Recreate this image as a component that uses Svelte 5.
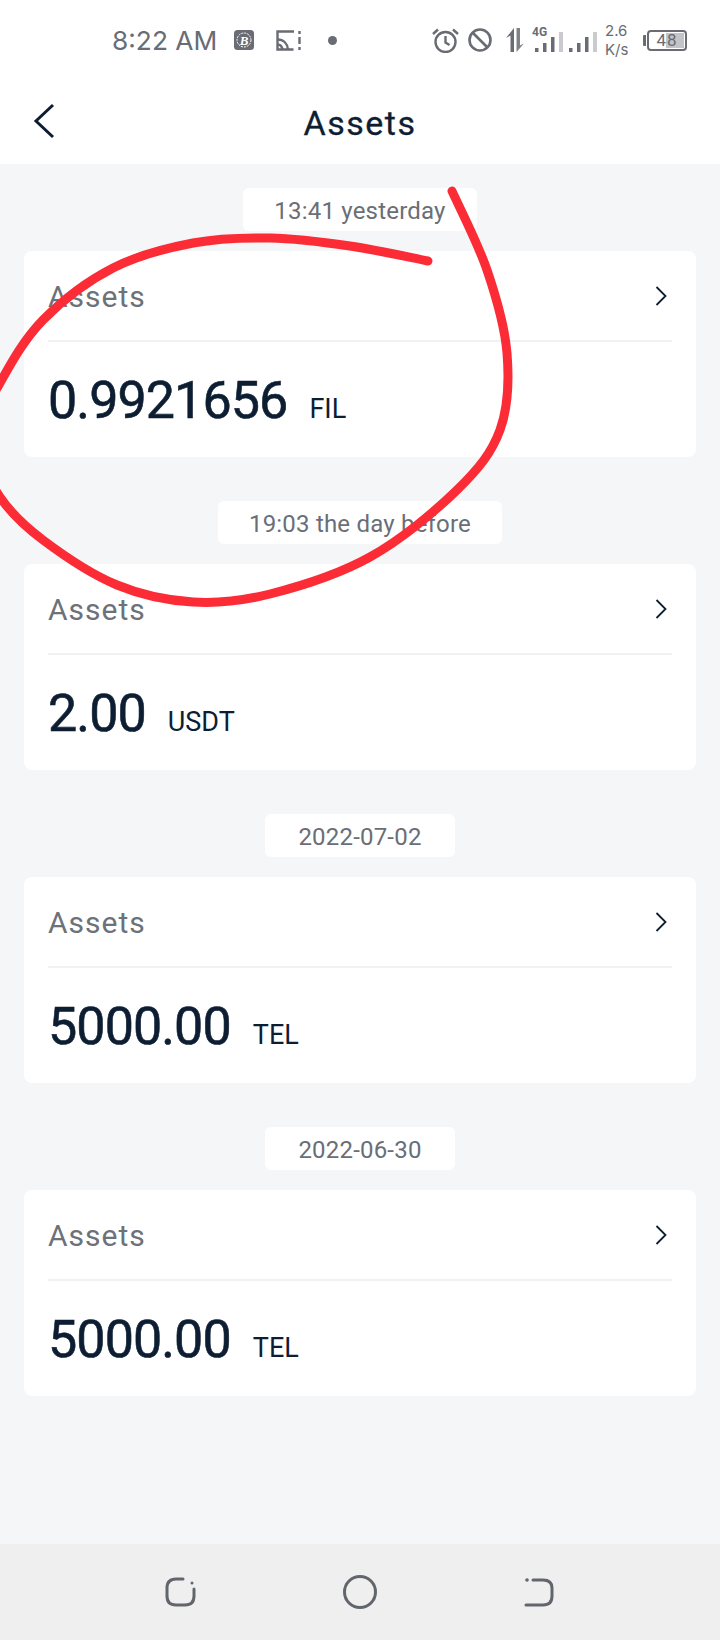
<script>
  const groups = [
    { when: '13:41 yesterday', amount: '0.9921656', unit: 'FIL' },
    { when: '19:03 the day before', amount: '2.00', unit: 'USDT' },
    { when: '2022-07-02', amount: '5000.00', unit: 'TEL' },
    { when: '2022-06-30', amount: '5000.00', unit: 'TEL' }
  ];

  // red pen circle drawn over the first card
  const pen = [
    [452, 191], [487, 270], [507, 353], [500, 430], [457, 490], [370, 557], [270, 594],
    [193, 602], [117, 585], [43, 540], [0, 497], [-24, 440], [0, 383], [43, 320], [113, 268],
    [193, 243], [270, 238], [350, 246], [428, 261]
  ];

  function smooth(pts) {
    let d = `M${pts[0][0]} ${pts[0][1]}`;
    for (let i = 0; i < pts.length - 1; i++) {
      const a = pts[i - 1] ?? pts[i];
      const b = pts[i];
      const c = pts[i + 1];
      const e = pts[i + 2] ?? c;
      const c1 = [b[0] + (c[0] - a[0]) / 6, b[1] + (c[1] - a[1]) / 6];
      const c2 = [c[0] - (e[0] - b[0]) / 6, c[1] - (e[1] - b[1]) / 6];
      d += ` C${c1[0]} ${c1[1]} ${c2[0]} ${c2[1]} ${c[0]} ${c[1]}`;
    }
    return d;
  }
</script>

<div class="screen">
  <header class="top">
    <div class="status">
      <span class="time">8:22 AM</span>
      <svg class="ic-b" width="20" height="20" viewBox="0 0 20 20">
        <rect width="20" height="20" rx="3.5" fill="#696c73" />
        <circle cx="10" cy="10" r="7" fill="none" stroke="#fff" stroke-width="1" stroke-dasharray="2 1" />
        <text x="10" y="14.5" text-anchor="middle" class="b-glyph">B</text>
      </svg>
      <svg class="ic-cast" width="25" height="21" viewBox="0 0 25 21" fill="none" stroke="#696c73" stroke-width="2.4">
        <path d="M18 1.5H1.5v18h16" />
        <path d="M1.5 9.5c6 0 10 4 10.5 10" />
        <path d="M1.5 14.5c3 0 4.5 2 5 5" />
        <path d="M23.5 1v3M23.5 7v7M23.5 17v3" />
      </svg>
      <span class="dot"></span>
      <svg class="ic-alarm" width="27" height="25" viewBox="0 0 27 25" fill="none" stroke="#696c73" stroke-width="2.4">
        <circle cx="13.5" cy="14" r="10" />
        <path d="M13.5 8v6.5l4 2.5M1 6l5-4.500M26 6l-5-4.500" />
      </svg>
      <svg class="ic-block" width="24" height="24" viewBox="0 0 24 24" fill="none" stroke="#696c73" stroke-width="2.6">
        <circle cx="12" cy="12" r="10.5" />
        <path d="M4.5 4.5l15 15" />
      </svg>
      <svg class="ic-arrows" width="18" height="24" viewBox="0 0 18 24" fill="#696c73">
        <path d="M8 0v24H4.5V7.5L0 10z" />
        <path d="M10.5 0H14v17.5l4-2-7.5 8.5z" opacity="0.85" />
      </svg>
      <div class="net">
        <span class="g4">4G</span>
        <svg width="63" height="20" viewBox="0 0 63 20" fill="#696c73">
          <rect x="0" y="16" width="3.5" height="4" />
          <rect x="8" y="11" width="3.5" height="9" />
          <rect x="16" y="5" width="3.5" height="15" />
          <rect x="24" y="0" width="4" height="20" fill="#c9cbce" />
          <rect x="34" y="16" width="3.5" height="4" />
          <rect x="42" y="11" width="3.5" height="9" />
          <rect x="50" y="5" width="3.5" height="15" />
          <rect x="58" y="0" width="4" height="20" fill="#c9cbce" />
        </svg>
      </div>
      <div class="speed"><span>2.6</span><span>K/s</span></div>
      <div class="battery">
        <span class="cap"></span>
        <div class="cell"><span class="level"></span><span class="pct">48</span></div>
      </div>
    </div>
    <div class="nav">
      <svg class="back" width="22" height="36" viewBox="0 0 22 36" fill="none" stroke="#0d1e33" stroke-width="3">
        <path d="M20 2L3 18l17 16" />
      </svg>
      <h1>Assets</h1>
    </div>
  </header>

  <main class="list">
    {#each groups as g}
      <section class="group">
        <div class="chip">{g.when}</div>
        <div class="card">
          <div class="card-head">
            <span>Assets</span>
            <svg width="12" height="20" viewBox="0 0 12 20" fill="none" stroke="#0d1e33" stroke-width="1.8">
              <path d="M1.5 1l9 9-9 9" />
            </svg>
          </div>
          <div class="card-body">
            <span class="amount">{g.amount}</span>
            <span class="unit">{g.unit}</span>
          </div>
        </div>
      </section>
    {/each}
  </main>

  <footer class="sysnav">
    <svg width="32" height="30" viewBox="0 0 32 30" fill="none" stroke="#62666c" stroke-width="3" stroke-linecap="round">
      <path d="M18 2h-7C5 2 2 5 2 11v8c0 6 3 9 9 9h9c6 0 9-3 9-9v-7" />
      <circle cx="27" cy="6" r="1.5" fill="#62666c" stroke="none" />
    </svg>
    <svg width="34" height="34" viewBox="0 0 34 34" fill="none" stroke="#62666c" stroke-width="3">
      <circle cx="17" cy="17" r="15.5" />
    </svg>
    <svg width="32" height="30" viewBox="0 0 32 30" fill="none" stroke="#62666c" stroke-width="3" stroke-linecap="round">
      <path d="M10 3h10c6 0 9 3 9 8v8c0 6-3 9-9 9H3" />
      <circle cx="4" cy="3" r="1.8" fill="#62666c" stroke="none" />
    </svg>
  </footer>

  <svg class="pen" width="720" height="1640" viewBox="0 0 720 1640" fill="none">
    <path d={smooth(pen)} stroke="#fb2c36" stroke-width="9" stroke-linecap="round" stroke-linejoin="round" />
  </svg>
</div>

<style>
  :global(body) {
    margin: 0;
  }

  .screen {
    position: relative;
    width: 720px;
    height: 1640px;
    overflow: hidden;
    display: flex;
    flex-direction: column;
    background: #f4f6f8;
    font-family: Roboto, "Liberation Sans", sans-serif;
  }

  .top {
    background: #fff;
    height: 164px;
    flex: none;
  }

  .status {
    height: 80px;
    display: flex;
    align-items: center;
    color: #696c73;
    padding-left: 112px;
    box-sizing: border-box;
  }

  .time {
    font-size: 26.3px;
    font-family: Inter, Roboto, sans-serif;
    width: 122px;
    flex: none;
  }

  .ic-cast {
    margin-left: 22px;
  }

  .dot {
    width: 9px;
    height: 9px;
    border-radius: 50%;
    background: #696c73;
    margin-left: 27px;
    margin-right: 95px;
  }

  .b-glyph {
    font: italic bold 13px "Liberation Serif", serif;
    fill: #fff;
  }

  .ic-block {
    margin-left: 9px;
  }

  .ic-arrows {
    margin-left: 14px;
  }

  .net {
    position: relative;
    margin-left: 11px;
    width: 63px;
    height: 27px;
    box-sizing: border-box;
    padding-bottom: 2px;
    display: flex;
    align-items: flex-end;
  }

  .g4 {
    position: absolute;
    left: -3px;
    top: -2px;
    font-size: 12px;
    font-weight: 700;
    line-height: 14px;
  }

  .speed {
    display: flex;
    flex-direction: column;
    font-size: 15px;
    line-height: 19px;
    margin-left: 7px;
    width: 38px;
    font-family: Inter, Roboto, sans-serif;
  }

  .battery {
    display: flex;
    align-items: center;
  }

  .cap {
    width: 3px;
    height: 11px;
    background: #696c73;
    border-radius: 1px 0 0 1px;
  }

  .cell {
    position: relative;
    width: 36px;
    height: 17px;
    margin-left: 1px;
    border: 2px solid #696c73;
    border-radius: 4px;
    display: flex;
    align-items: center;
    justify-content: center;
    font-size: 17px;
  }

  .level {
    position: absolute;
    right: 1px;
    top: 1px;
    bottom: 1px;
    width: 18px;
    background: #c2c4c7;
  }

  .pct {
    position: relative;
    letter-spacing: 1px;
  }

  .nav {
    position: relative;
    height: 84px;
    display: flex;
    align-items: center;
    justify-content: center;
  }

  .back {
    position: absolute;
    left: 33px;
    top: 23px;
  }

  h1 {
    margin: 2px 0 0;
    font-size: 34px;
    font-weight: 400;
    letter-spacing: 1.5px;
    color: #0d1e33;
    -webkit-text-stroke: 0.3px #0d1e33;
  }

  .list {
    flex: 1;
    padding: 24px 24px 0;
    display: flex;
    flex-direction: column;
    gap: 44px;
  }

  .group {
    display: flex;
    flex-direction: column;
    align-items: center;
    gap: 20px;
  }

  .chip {
    height: 43px;
    box-sizing: border-box;
    padding: 2px 31px 0;
    min-width: 190px;
    display: flex;
    align-items: center;
    justify-content: center;
    background: #fff;
    border-radius: 6px;
    font-size: 24px;
    letter-spacing: 0.2px;
    color: #6a6e76;
  }

  .card {
    align-self: stretch;
    height: 206px;
    box-sizing: border-box;
    padding: 0 24px;
    background: #fff;
    border-radius: 8px;
  }

  .card-head {
    height: 91px;
    display: flex;
    align-items: center;
    justify-content: space-between;
    box-sizing: border-box;
    padding: 1px 5px 0 0;
    border-bottom: 2px solid #f0f1f3;
    font-size: 30px;
    letter-spacing: 1px;
    color: #6d7178;
  }

  .card-body {
    display: flex;
    align-items: baseline;
    gap: 22px;
    padding-top: 27px;
    color: #0d1e33;
  }

  .amount {
    font-size: 52px;
    letter-spacing: -0.9px;
    line-height: 64px;
    -webkit-text-stroke: 0.6px #0d1e33;
  }

  .unit {
    font-size: 27px;
  }

  .sysnav {
    flex: none;
    height: 96px;
    background: #efefef;
    display: flex;
    align-items: center;
    justify-content: center;
    gap: 146px;
    box-sizing: border-box;
  }

  .pen {
    position: absolute;
    left: 0;
    top: 0;
    pointer-events: none;
  }
</style>
